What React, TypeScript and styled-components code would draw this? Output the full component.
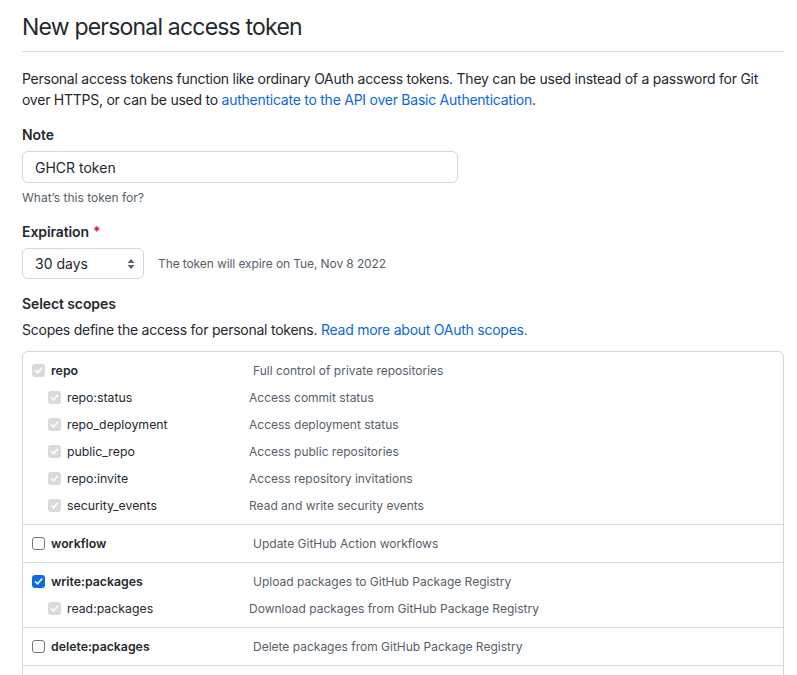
import styled, { createGlobalStyle } from 'styled-components';

const GlobalStyle = createGlobalStyle`
  html, body {
    margin: 0;
    padding: 0;
    background: #ffffff;
  }
  body {
    font-family: Inter, "Noto Sans", "Liberation Sans", sans-serif;
    color: #24292f;
    -webkit-font-smoothing: antialiased;
  }
`;

const Root = styled.main`
  width: 784px;
  padding: 12px 0 0 22px;
  height: 675px;
  overflow: hidden;
  box-sizing: border-box;
`;

const Header = styled.header`
  border-bottom: 1px solid #d8dee4;
  padding-bottom: 9px;
  margin-bottom: 16px;
`;

const Title = styled.h1`
  margin: 0;
  font-size: 23px;
  font-weight: 400;
  line-height: 30px;
  letter-spacing: -0.8px;
`;

const Lead = styled.p`
  margin: 0 0 14px 0;
  font-size: 14px;
  line-height: 21px;
  letter-spacing: -0.25px;
`;

const Link = styled.a`
  color: #0969da;
  text-decoration: none;
`;

const Field = styled.div`
  margin-bottom: 14px;
`;

const Label = styled.label`
  display: block;
  font-size: 14px;
  font-weight: 600;
  line-height: 21px;
  margin-bottom: 6px;
  letter-spacing: -0.1px;
`;

const Required = styled.span`
  color: #cf222e;
  margin-left: 4px;
`;

const TextInput = styled.input`
  width: 436px;
  height: 32px;
  box-sizing: border-box;
  padding: 0 12px;
  border: 1px solid #d0d7de;
  border-radius: 6px;
  font-family: inherit;
  font-size: 14px;
  color: #24292f;
  background: #ffffff;
  outline: none;
`;

const Note = styled.p`
  margin: 6px 0 0 0;
  font-size: 12px;
  line-height: 18px;
  color: #57606a;
`;

const Row = styled.div`
  display: flex;
  align-items: center;
  gap: 14px;
`;

const SelectBox = styled.div`
  width: 122px;
  height: 31px;
  box-sizing: border-box;
  padding: 0 8px 0 12px;
  border: 1px solid #d0d7de;
  border-radius: 6px;
  display: flex;
  align-items: center;
  justify-content: space-between;
  font-size: 14px;
`;

const InlineNote = styled.span`
  font-size: 12px;
  color: #57606a;
  letter-spacing: -0.1px;
`;

const SectionTitle = styled.h3`
  margin: 0;
  font-size: 14px;
  font-weight: 600;
  line-height: 21px;
  letter-spacing: -0.1px;
`;

const SectionText = styled.p`
  margin: 5px 0 11px 0;
  font-size: 14px;
  line-height: 21px;
  letter-spacing: -0.25px;
`;

const ScopeTable = styled.div`
  border: 1px solid #d0d7de;
  border-radius: 6px;
  width: 762px;
  box-sizing: border-box;
`;

const ScopeGroup = styled.div`
  padding: 5px 10px 5px 9px;
  & + & {
    border-top: 1px solid #d8dee4;
  }
`;

const ScopeRow = styled.div<{ $child?: boolean }>`
  display: flex;
  align-items: center;
  height: 27px;
  padding-left: ${(p) => (p.$child ? '16px' : '0')};
`;

const ScopeName = styled.span<{ $child?: boolean }>`
  width: ${(p) => (p.$child ? '182px' : '202px')};
  margin-left: 6px;
  font-size: 12.3px;
  font-weight: ${(p) => (p.$child ? 400 : 600)};
`;

const ScopeDesc = styled.span`
  font-size: 12px;
  color: #57606a;
`;

type State = 'off' | 'on' | 'locked';

const Box = styled.span<{ $state: State }>`
  width: 13px;
  height: 13px;
  box-sizing: border-box;
  border-radius: 3px;
  display: inline-flex;
  align-items: center;
  justify-content: center;
  flex-shrink: 0;
  background: ${(p) =>
    p.$state === 'on' ? '#0b6ee0' : p.$state === 'locked' ? '#dadada' : '#ffffff'};
  border: ${(p) => (p.$state === 'off' ? '1px solid #767676' : 'none')};
`;

function Checkbox({ state }: { state: State }) {
  return (
    <Box $state={state}>
      {state !== 'off' && (
        <svg width="9" height="9" viewBox="0 0 10 10">
          <path
            d="M1.6 5.2 L4 7.6 L8.6 2.2"
            fill="none"
            stroke="#ffffff"
            strokeWidth="1.7"
            strokeLinecap="round"
            strokeLinejoin="round"
          />
        </svg>
      )}
    </Box>
  );
}

function SelectArrows() {
  return (
    <svg width="8" height="12" viewBox="0 0 8 12">
      <path d="M4 1 L7.5 5 H0.5 Z" fill="#57606a" />
      <path d="M4 11 L7.5 7 H0.5 Z" fill="#57606a" />
    </svg>
  );
}

type Scope = {
  name: string;
  desc: string;
  state: State;
  children?: { name: string; desc: string }[];
};

const scopes: Scope[] = [
  {
    name: 'repo',
    desc: 'Full control of private repositories',
    state: 'locked',
    children: [
      { name: 'repo:status', desc: 'Access commit status' },
      { name: 'repo_deployment', desc: 'Access deployment status' },
      { name: 'public_repo', desc: 'Access public repositories' },
      { name: 'repo:invite', desc: 'Access repository invitations' },
      { name: 'security_events', desc: 'Read and write security events' },
    ],
  },
  { name: 'workflow', desc: 'Update GitHub Action workflows', state: 'off' },
  {
    name: 'write:packages',
    desc: 'Upload packages to GitHub Package Registry',
    state: 'on',
    children: [
      { name: 'read:packages', desc: 'Download packages from GitHub Package Registry' },
    ],
  },
  { name: 'delete:packages', desc: 'Delete packages from GitHub Package Registry', state: 'off' },
  { name: 'admin:org', desc: 'Full control of orgs and teams, read and write org projects', state: 'off' },
];

export default function App() {
  return (
    <Root>
      <GlobalStyle />
      <Header>
        <Title>New personal access token</Title>
      </Header>
      <Lead>
        Personal access tokens function like ordinary OAuth access tokens. They can be used instead
        of a password for Git over HTTPS, or can be used to{' '}
        <Link href="#">authenticate to the API over Basic Authentication</Link>.
      </Lead>

      <Field>
        <Label>Note</Label>
        <TextInput defaultValue="GHCR token" />
        <Note>What’s this token for?</Note>
      </Field>

      <Field>
        <Label>
          Expiration<Required>*</Required>
        </Label>
        <Row>
          <SelectBox>
            <span>30 days</span>
            <SelectArrows />
          </SelectBox>
          <InlineNote>The token will expire on Tue, Nov 8 2022</InlineNote>
        </Row>
      </Field>

      <SectionTitle>Select scopes</SectionTitle>
      <SectionText>
        Scopes define the access for personal tokens.{' '}
        <Link href="#">Read more about OAuth scopes.</Link>
      </SectionText>

      <ScopeTable>
        {scopes.map((s) => (
          <ScopeGroup key={s.name}>
            <ScopeRow>
              <Checkbox state={s.state} />
              <ScopeName>{s.name}</ScopeName>
              <ScopeDesc>{s.desc}</ScopeDesc>
            </ScopeRow>
            {s.children?.map((c) => (
              <ScopeRow $child key={c.name}>
                <Checkbox state="locked" />
                <ScopeName $child>{c.name}</ScopeName>
                <ScopeDesc>{c.desc}</ScopeDesc>
              </ScopeRow>
            ))}
          </ScopeGroup>
        ))}
      </ScopeTable>
    </Root>
  );
}
